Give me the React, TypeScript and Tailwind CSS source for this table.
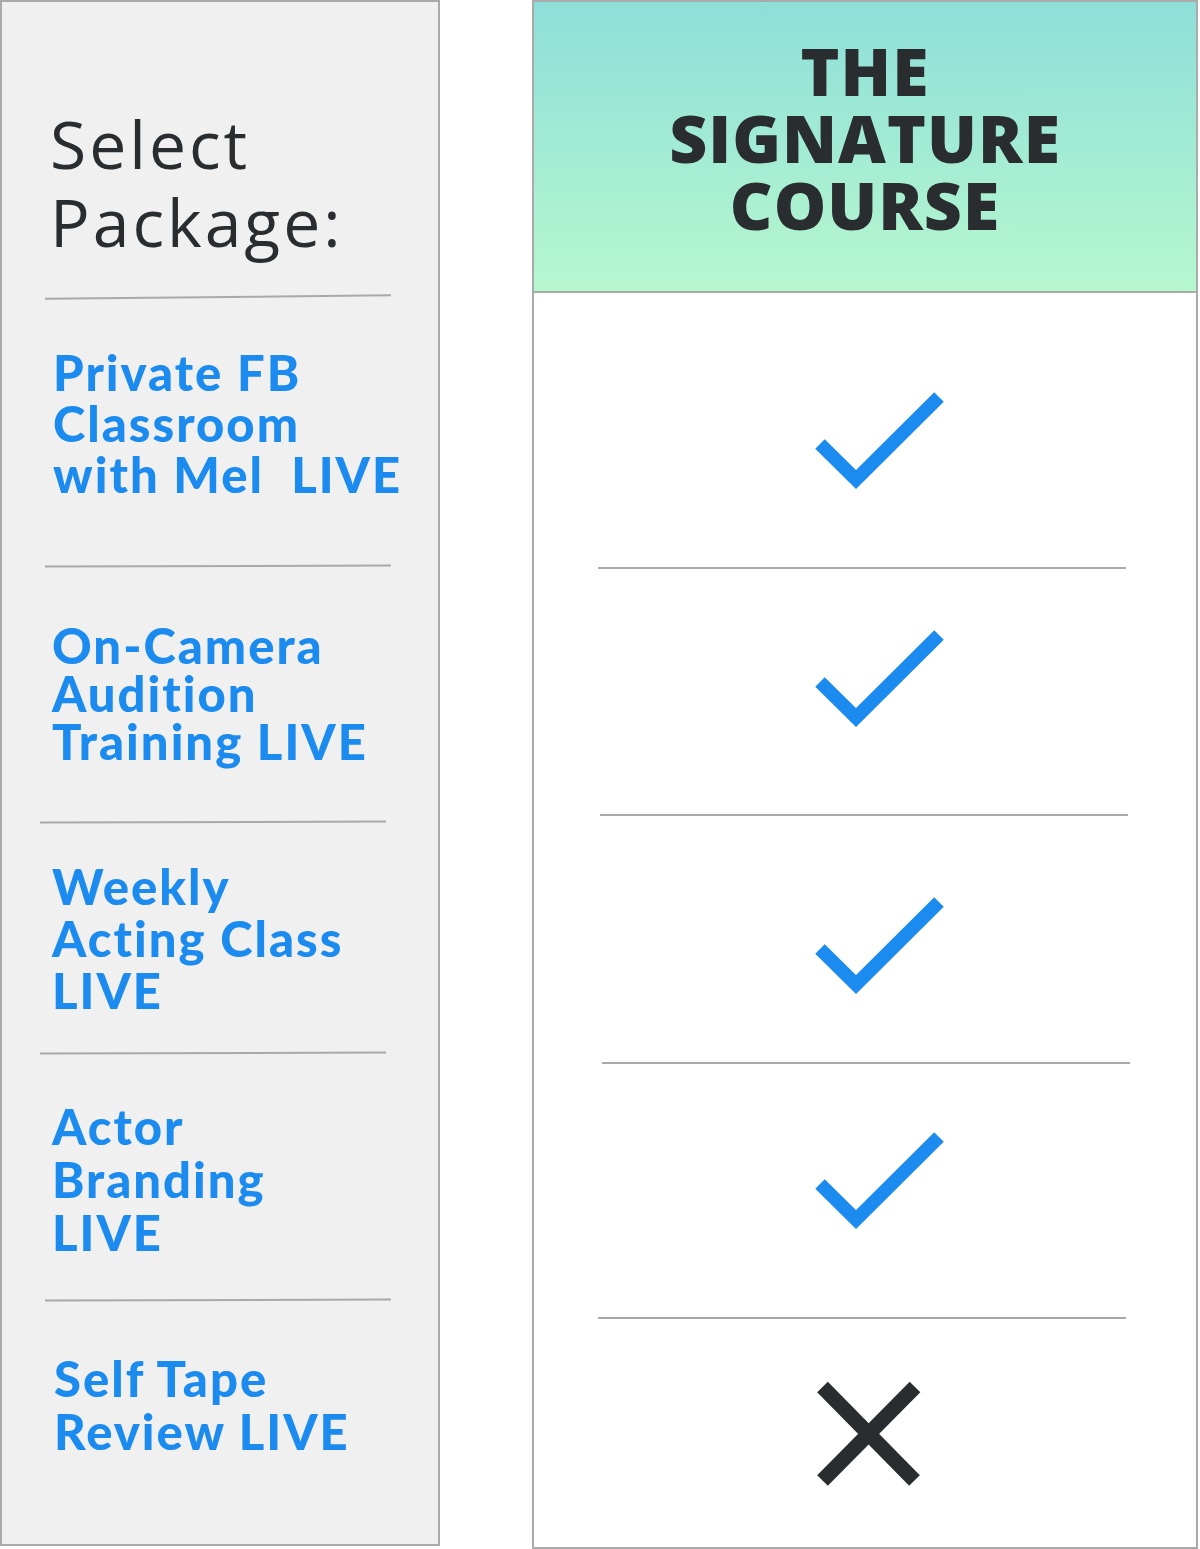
const blue = "text-[#1b8bf0]"

function Divider({ className }: { className: string }) {
  return <div className={`h-[2px] bg-[#a9a9a9] ${className}`} />
}

function Check() {
  return (
    <svg width="136" height="100" viewBox="0 0 136 100" fill="none">
      <polyline points="8,54 44,89.5 127,7" stroke="#1b8bf0" strokeWidth="13.5" strokeLinejoin="miter" />
    </svg>
  )
}

function Cross() {
  return (
    <svg width="110" height="110" viewBox="0 0 110 110" fill="none">
      <line x1="8.5" y1="8" x2="100.5" y2="101.5" stroke="#2a2d30" strokeWidth="15" />
      <line x1="101" y1="8" x2="8.5" y2="101.5" stroke="#2a2d30" strokeWidth="15" />
    </svg>
  )
}

function Feature({ lines, className }: { lines: string[]; className: string }) {
  return (
    <div className={`font-['Lato',sans-serif] font-black text-[49px] tracking-[2px] whitespace-pre ${blue} ${className}`}>
      {lines.map((l) => (
        <div key={l}>{l}</div>
      ))}
    </div>
  )
}

export default function App() {
  return (
    <div className="flex bg-white w-[1200px] h-[1549px]">
      {/* left column: package names */}
      <div className="w-[440px] h-[1546px] border-2 border-[#aaaaaa] bg-[#f0f0f0] flex flex-col">
        <div className="h-[294px] pt-[102px] pl-[48px] font-['Open_Sans',sans-serif] text-[66px] leading-[78px] tracking-[3px] text-[#2a2d30]">
          <div>Select</div>
          <div>Package:</div>
        </div>
        <Divider className="ml-[43px] w-[346px] rotate-[-0.55deg]" />
        <div className="h-[267px]">
          <Feature className="pt-[49px] pl-[51px] leading-[51px]" lines={["Private FB", "Classroom", "with Mel\u00a0 LIVE"]} />
        </div>
        <Divider className="ml-[43px] w-[346px] rotate-[-0.15deg]" />
        <div className="h-[254px]">
          <Feature className="pt-[54px] pl-[50px] leading-[48px]" lines={["On-Camera", "Audition", "Training LIVE"]} />
        </div>
        <Divider className="ml-[38px] w-[346px] rotate-[-0.15deg]" />
        <div className="h-[229px]">
          <Feature className="pt-[37px] pl-[50px] leading-[52px]" lines={["Weekly", "Acting Class", "LIVE"]} />
        </div>
        <Divider className="ml-[38px] w-[346px] rotate-[-0.15deg]" />
        <div className="h-[245px]">
          <Feature className="pt-[46px] pl-[50px] leading-[53px]" lines={["Actor", "Branding", "LIVE"]} />
        </div>
        <Divider className="ml-[43px] w-[346px] rotate-[-0.15deg]" />
        <div className="flex-1">
          <Feature className="pt-[51px] pl-[52px] leading-[53px]" lines={["Self Tape", "Review LIVE"]} />
        </div>
      </div>

      {/* right column: the package */}
      <div className="ml-[92px] w-[666px] h-[1549px] border-2 border-[#aaaaaa] flex flex-col">
        <div className="h-[291px] border-b-2 border-[#aaaaaa] bg-gradient-to-b from-[#8edfd9] to-[#b6f7ce] flex flex-col items-center pt-[35px] font-['Open_Sans',sans-serif] font-extrabold text-[66px] leading-[67px] tracking-[1px] text-[#2a2d30]">
          <div>THE</div>
          <div>SIGNATURE</div>
          <div>COURSE</div>
        </div>
        <div className="h-[274px] pt-[97px] pl-[278px]">
          <Check />
        </div>
        <Divider className="ml-[64px] w-[528px]" />
        <div className="h-[245px] pt-[59px] pl-[278px]">
          <Check />
        </div>
        <Divider className="ml-[66px] w-[528px]" />
        <div className="h-[246px] pt-[79px] pl-[278px]">
          <Check />
        </div>
        <Divider className="ml-[68px] w-[528px]" />
        <div className="h-[253px] pt-[66px] pl-[278px]">
          <Check />
        </div>
        <Divider className="ml-[64px] w-[528px]" />
        <div className="flex-1 pt-[60px] pl-[280px]">
          <Cross />
        </div>
      </div>
    </div>
  )
}
